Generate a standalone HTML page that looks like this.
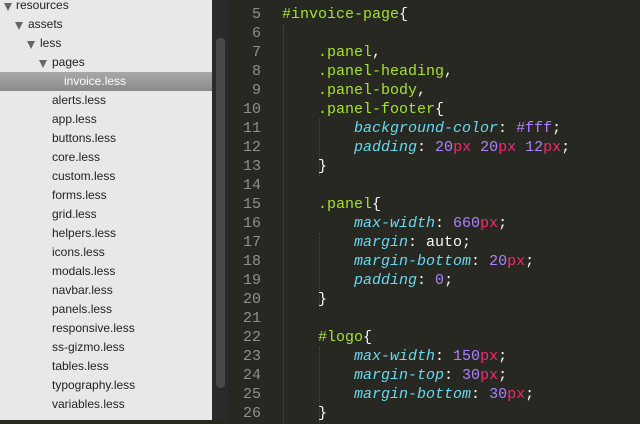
<!DOCTYPE html><html><head><style>
body{margin:0;width:640px;height:420px;overflow:hidden;background:#272822;position:relative;font-family:"Liberation Sans",sans-serif}
#side{position:absolute;left:0;top:0;width:212px;height:420px;background:#e8e8e8}
.r{position:absolute;height:19px;line-height:19px;font-size:12px;color:#222;white-space:nowrap}
.t{position:absolute;width:0;height:0;border-left:4px solid transparent;border-right:4px solid transparent;border-top:8px solid #666;top:6px}
#sel{position:absolute;left:0;top:72px;width:212px;height:19px;background:linear-gradient(#a8a8a8,#8a8a8a)}
#sb{position:absolute;left:212px;top:0;width:16px;height:420px;background:#2a2a2a}
#th{position:absolute;left:216px;top:38px;width:9px;height:350px;background:#484848;border-radius:4px}
.ln{position:absolute;left:228px;width:33px;text-align:right;color:#8f908a;font:15px/19px "Liberation Mono",monospace}
.c{position:absolute;left:282px;font:15px/19px "Liberation Mono",monospace;color:#f8f8f2;white-space:pre}
.g{color:#a6e22e}.b{color:#66d9ef;font-style:italic}.p{color:#ae81ff}.k{color:#f92672}
.gd{position:absolute;border-left:1px dotted #4a4a44;width:0}
</style></head><body>
<div id="side">
<div id="sel"></div>
<div class="t" style="left:4px;top:3px"></div><div class="r" style="left:16px;top:-4px">resources</div>
<div class="t" style="left:15px;top:22px"></div><div class="r" style="left:28px;top:15px">assets</div>
<div class="t" style="left:27px;top:41px"></div><div class="r" style="left:40px;top:34px">less</div>
<div class="t" style="left:39px;top:60px"></div><div class="r" style="left:52px;top:53px">pages</div>
<div class="r" style="left:64px;top:72px;color:#fff">invoice.less</div>
<div class="r" style="left:52px;top:91px">alerts.less</div>
<div class="r" style="left:52px;top:110px">app.less</div>
<div class="r" style="left:52px;top:129px">buttons.less</div>
<div class="r" style="left:52px;top:148px">core.less</div>
<div class="r" style="left:52px;top:167px">custom.less</div>
<div class="r" style="left:52px;top:186px">forms.less</div>
<div class="r" style="left:52px;top:205px">grid.less</div>
<div class="r" style="left:52px;top:224px">helpers.less</div>
<div class="r" style="left:52px;top:243px">icons.less</div>
<div class="r" style="left:52px;top:262px">modals.less</div>
<div class="r" style="left:52px;top:281px">navbar.less</div>
<div class="r" style="left:52px;top:300px">panels.less</div>
<div class="r" style="left:52px;top:319px">responsive.less</div>
<div class="r" style="left:52px;top:338px">ss-gizmo.less</div>
<div class="r" style="left:52px;top:357px">tables.less</div>
<div class="r" style="left:52px;top:376px">typography.less</div>
<div class="r" style="left:52px;top:395px">variables.less</div>
</div>
<div id="sb"></div><div id="th"></div>
<div class="gd" style="left:283px;top:24px;height:400px"></div>
<div class="gd" style="left:319px;top:119px;height:57px"></div>
<div class="gd" style="left:319px;top:233px;height:76px"></div>
<div class="gd" style="left:319px;top:347px;height:76px"></div>
<div class="ln" style="top:5px">5<br>6<br>7<br>8<br>9<br>10<br>11<br>12<br>13<br>14<br>15<br>16<br>17<br>18<br>19<br>20<br>21<br>22<br>23<br>24<br>25<br>26</div>
<div class="c" style="top:5px"><span class="g">#invoice-page</span>{

    <span class="g">.panel</span>,
    <span class="g">.panel-heading</span>,
    <span class="g">.panel-body</span>,
    <span class="g">.panel-footer</span>{
        <span class="b">background-color</span>: <span class="p">#fff</span>;
        <span class="b">padding</span>: <span class="p">20</span><span class="k">px</span> <span class="p">20</span><span class="k">px</span> <span class="p">12</span><span class="k">px</span>;
    }

    <span class="g">.panel</span>{
        <span class="b">max-width</span>: <span class="p">660</span><span class="k">px</span>;
        <span class="b">margin</span>: auto;
        <span class="b">margin-bottom</span>: <span class="p">20</span><span class="k">px</span>;
        <span class="b">padding</span>: <span class="p">0</span>;
    }

    <span class="g">#logo</span>{
        <span class="b">max-width</span>: <span class="p">150</span><span class="k">px</span>;
        <span class="b">margin-top</span>: <span class="p">30</span><span class="k">px</span>;
        <span class="b">margin-bottom</span>: <span class="p">30</span><span class="k">px</span>;
    }</div>
</body></html>
